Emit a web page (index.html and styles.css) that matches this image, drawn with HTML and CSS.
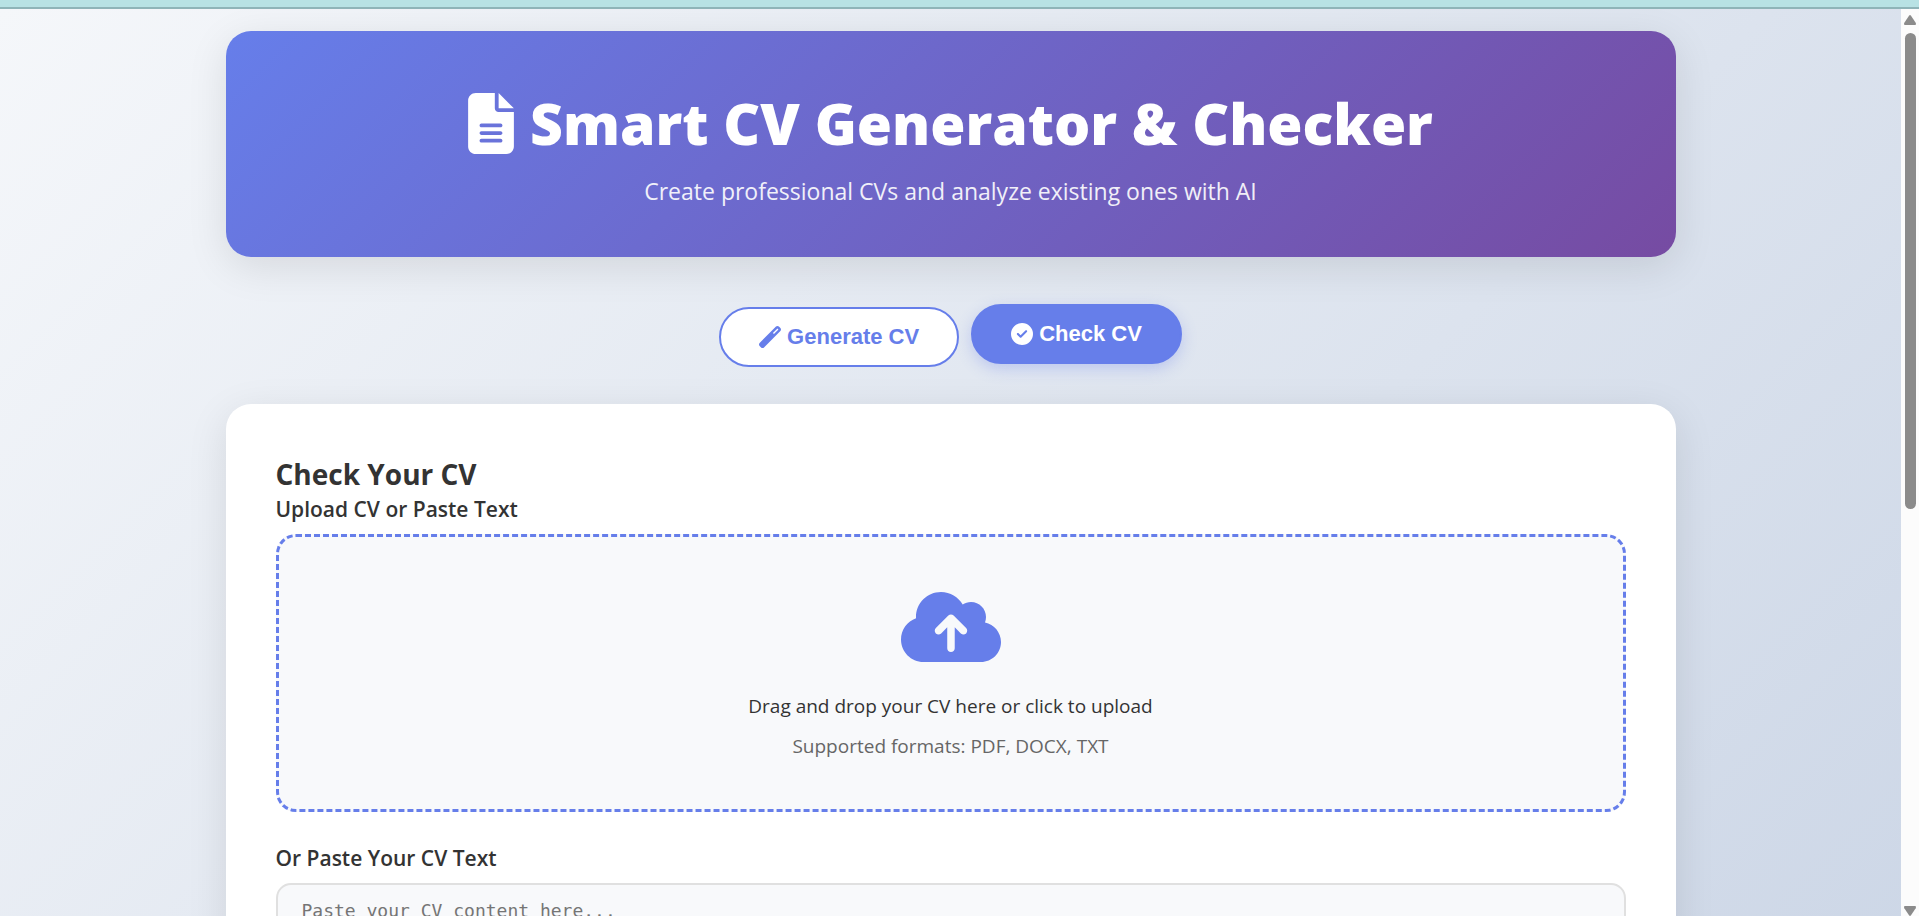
FILE: index.html
```html
<!DOCTYPE html>
<html lang="en">
<head>
<meta charset="utf-8">
<meta name="viewport" content="width=device-width, initial-scale=1">
<title>Smart CV Generator &amp; Checker</title>
<link rel="stylesheet" href="styles.css">
</head>
<body>
<div class="topbar"></div>
<div class="window">
  <div class="page">
    <div class="container">
      <header class="hero">
        <h1 class="hero-title">
          <svg class="icon-file" viewBox="0 0 384 512" aria-hidden="true"><path fill="currentColor" d="M64 0C28.7 0 0 28.7 0 64V448c0 35.3 28.7 64 64 64H320c35.3 0 64-28.7 64-64V160H256c-17.7 0-32-14.3-32-32V0H64zM256 0V128H384L256 0zM112 256H272c8.800 0 16 7.200 16 16s-7.200 16-16 16H112c-8.800 0-16-7.200-16-16s7.200-16 16-16zm0 64H272c8.800 0 16 7.200 16 16s-7.200 16-16 16H112c-8.800 0-16-7.200-16-16s7.200-16 16-16zm0 64H272c8.800 0 16 7.200 16 16s-7.200 16-16 16H112c-8.800 0-16-7.200-16-16s7.200-16 16-16z"/></svg>
          <span>Smart CV Generator &amp; Checker</span>
        </h1>
        <p class="hero-text">Create professional CVs and analyze existing ones with AI</p>
      </header>

      <nav class="tabs">
        <button class="tab" type="button">
          <svg class="icon-tab" viewBox="0 0 512 512" aria-hidden="true"><path fill="currentColor" d="M14.100 463.300c-18.700-18.700-18.700-49.100 0-67.900L395.400 14.100c18.700-18.700 49.100-18.700 67.900 0l34.600 34.600c18.700 18.700 18.700 49.100 0 67.900L116.500 497.900c-18.700 18.700-49.100 18.700-67.900 0L14.100 463.300zM347.600 187.600l105-105L429.400 59.300l-105 105 23.300 23.300z"/></svg>
          Generate CV
        </button>
        <button class="tab tab-active" type="button">
          <svg class="icon-tab" viewBox="0 0 512 512" aria-hidden="true"><path fill="currentColor" d="M256 512A256 256 0 1 0 256 0a256 256 0 1 0 0 512zM369 209L241 337c-9.400 9.400-24.600 9.400-33.900 0l-64-64c-9.400-9.400-9.400-24.600 0-33.900s24.600-9.400 33.900 0l47 47L335 175c9.400-9.400 24.600-9.400 33.900 0s9.400 24.600 0 33.900z"/></svg>
          Check CV
        </button>
      </nav>

      <main class="card">
        <h2 class="card-title">Check Your CV</h2>
        <div class="label">Upload CV or Paste Text</div>
        <button class="dropzone" type="button">
          <svg class="icon-cloud" viewBox="0 0 640 512" aria-hidden="true"><path fill="currentColor" d="M144 480C64.500 480 0 415.500 0 336c0-62.800 40.200-116.200 96.200-135.900c-.1-2.700-.2-5.400-.2-8.100c0-88.400 71.600-160 160-160c59.300 0 111 32.200 138.700 80.200C409.900 102 428.300 96 448 96c53 0 96 43 96 96c0 12.200-2.300 23.800-6.400 34.600C596 238.400 640 290.100 640 352c0 70.700-57.300 128-128 128H144zm79-217c-9.400 9.400-9.400 24.600 0 33.900s24.600 9.400 33.900 0l39-39V392c0 13.300 10.700 24 24 24s24-10.700 24-24V257.900l39 39c9.400 9.400 24.600 9.400 33.900 0s9.400-24.600 0-33.900l-80-80c-9.400-9.400-24.600-9.400-33.900 0l-80 80z"/></svg>
          <span class="drop-text">Drag and drop your CV here or click to upload</span>
          <span class="drop-hint">Supported formats: PDF, DOCX, TXT</span>
        </button>
        <label class="label label-paste" for="cv-text">Or Paste Your CV Text</label>
        <textarea class="textarea" id="cv-text" rows="10" placeholder="Paste your CV content here..."></textarea>
      </main>
    </div>
  </div>
  <div class="scrollbar" aria-hidden="true">
    <svg class="arrow" viewBox="0 0 12 10"><path fill="#8b8b8b" d="M5 .7Q6-.5 7 .7L11.700 7.800Q12.500 9.800 11 10H1Q-.5 9.800.3 7.800z"/></svg>
    <div class="track"><div class="thumb"></div></div>
    <svg class="arrow arrow-down" viewBox="0 0 12 10"><path fill="#8b8b8b" d="M5 .7Q6-.5 7 .7L11.700 7.800Q12.500 9.800 11 10H1Q-.5 9.800.3 7.800z"/></svg>
  </div>
</div>
</body>
</html>
```
FILE: styles.css
```css
* {
  box-sizing: border-box;
  margin: 0;
  padding: 0;
}

body {
  display: flex;
  flex-direction: column;
  height: 100vh;
  overflow: hidden;
  font-family: "Open Sans", "Noto Sans", sans-serif;
  color: #333;
}

.topbar {
  flex: none;
  height: 9px;
  background: #b8e2e4;
  border-bottom: 2px solid #8fb4b8;
}

.window {
  flex: 1;
  min-height: 0;
  display: flex;
}

.page {
  flex: 1;
  overflow: hidden;
  padding: 22px 20px;
  background: linear-gradient(135deg, #f5f7fa 0%, #c3cfe2 100%) 0 0 / 100% 1640px no-repeat;
}

.container {
  max-width: 1450px;
  margin: 0 auto;
}

.hero {
  padding: 50px 40px 48px;
  border-radius: 25px;
  background: linear-gradient(135deg, #667eea 0%, #764ba2 100%);
  box-shadow: 0 10px 40px rgba(0, 0, 0, 0.1);
  color: #fff;
  text-align: center;
}

.hero-title {
  display: flex;
  justify-content: center;
  align-items: center;
  gap: 16px;
  font-size: 57px;
  font-weight: 800;
  line-height: 84px;
}

.icon-file {
  width: 46px;
  height: 61px;
}

.hero-text {
  margin-top: 8px;
  font-size: 23px;
  line-height: 36px;
  opacity: 0.9;
}

.tabs {
  display: flex;
  justify-content: center;
  gap: 12px;
  margin: 50px 0 37px;
}

.tab {
  display: flex;
  align-items: center;
  gap: 6px;
  height: 60px;
  padding: 0 38px;
  border: 2px solid #667eea;
  border-radius: 30px;
  background: #fff;
  color: #667eea;
  font: bold 22px "Liberation Sans", Arial, sans-serif;
}

.tab-active {
  background: #667eea;
  color: #fff;
  box-shadow: 0 5px 15px rgba(102, 126, 234, 0.3);
  transform: translateY(-3px);
}

.icon-tab {
  width: 22px;
  height: 22px;
}

.card {
  padding: 50px;
  border-radius: 25px;
  background: #fff;
  box-shadow: 0 10px 40px rgba(0, 0, 0, 0.1);
}

.card-title {
  font-size: 28px;
  font-weight: 700;
  line-height: 40px;
}

.label {
  display: block;
  margin-bottom: 10px;
  font-size: 21px;
  font-weight: 600;
  line-height: 30px;
}

.dropzone {
  display: flex;
  flex-direction: column;
  align-items: center;
  width: 100%;
  padding: 50px 50px 48px;
  border: 3px dashed #667eea;
  border-radius: 20px;
  background: #f8f9fb;
  color: #333;
  font: 19px/30px "Open Sans", "Noto Sans", sans-serif;
}

.icon-cloud {
  width: 100px;
  height: 80px;
  margin-bottom: 24px;
  color: #667eea;
}

.drop-hint {
  margin-top: 10px;
  color: #666;
}

.label-paste {
  margin-top: 31px;
}

.textarea {
  display: block;
  width: 100%;
  padding: 14px 24px;
  border: 2px solid #e0e0e0;
  border-radius: 15px;
  background: #f8f9fb;
  font: 18px/24px "DejaVu Sans Mono", monospace;
  resize: none;
}

.textarea::placeholder {
  color: #757575;
}

.scrollbar {
  flex: none;
  display: flex;
  flex-direction: column;
  align-items: center;
  gap: 8px;
  width: 18px;
  padding-top: 6px;
  background: #fcfcfc;
}

.arrow {
  flex: none;
  width: 12px;
  height: 10px;
}

.arrow-down {
  transform: rotate(180deg);
}

.track {
  flex: 1;
  width: 11px;
}

.thumb {
  height: 55%;
  border-radius: 6px;
  background: #8b8b8b;
}
```
